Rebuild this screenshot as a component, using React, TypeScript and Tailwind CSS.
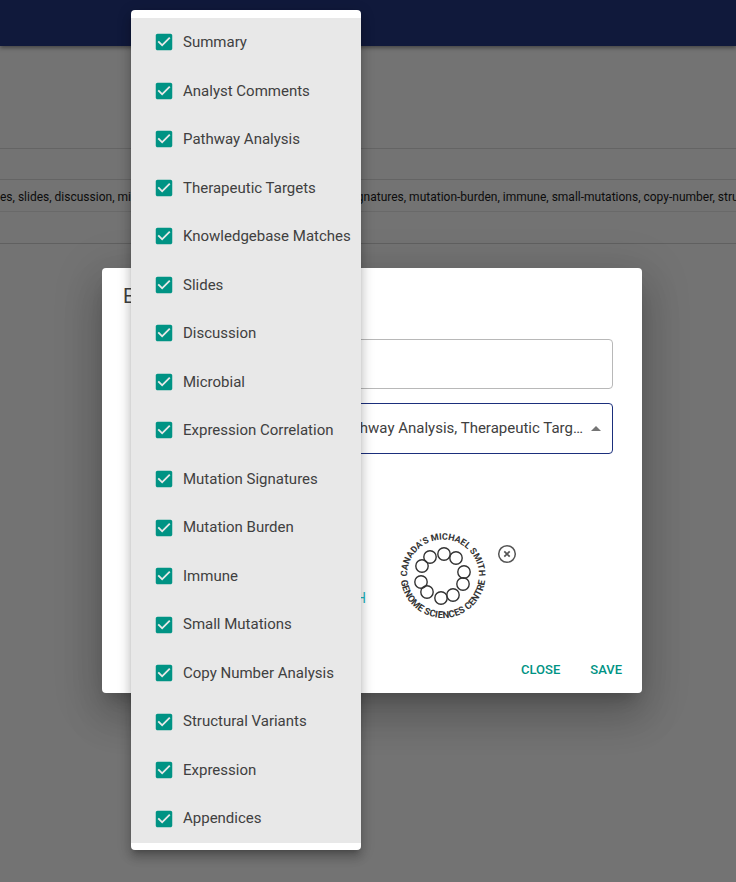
import React from "react";

const SECTIONS = [
  "Summary",
  "Analyst Comments",
  "Pathway Analysis",
  "Therapeutic Targets",
  "Knowledgebase Matches",
  "Slides",
  "Discussion",
  "Microbial",
  "Expression Correlation",
  "Mutation Signatures",
  "Mutation Burden",
  "Immune",
  "Small Mutations",
  "Copy Number Analysis",
  "Structural Variants",
  "Expression",
  "Appendices",
];

const SECTION_KEYS =
  "es, slides, discussion, microbial, expression-correlation, mutation-signatures, mutation-burden, immune, small-mutations, copy-number, structural-variants, expression, appendices";

const RING = [
  [444, 554], [456, 558], [464, 572], [463, 584], [453, 595],
  [441, 598], [427, 592], [421, 582], [422, 566], [430, 557],
];

function SectionItem({ name }: { name: string }) {
  return (
    <label className="flex items-center bg-[#e8e8e8] pr-2 pl-[22px] text-[15px] text-[#404040]">
      <span className="mr-2 grid place-items-center">
        <input
          type="checkbox"
          defaultChecked
          className="col-start-1 row-start-1 size-[22px] appearance-none"
        />
        <svg
          viewBox="0 0 24 24"
          className="pointer-events-none col-start-1 row-start-1 size-[22px] fill-[#009384]"
          aria-hidden="true"
        >
          <path d="M19 3H5c-1.11 0-2 .9-2 2v14c0 1.1.89 2 2 2h14c1.11 0 2-.9 2-2V5c0-1.1-.89-2-2-2zm-9 14l-5-5 1.41-1.41L10 14.17l7.59-7.59L19 8l-9 9z" />
        </svg>
      </span>
      <span className="whitespace-nowrap">{name}</span>
    </label>
  );
}

function CentreLogo() {
  return (
    <svg viewBox="398 531 90 90" className="size-[90px]" role="img" aria-label="Genome Sciences Centre">
      <defs>
        <path id="upper" d="M443 611.500A36 36 0 0 1 443 539.500A36 36 0 0 1 443 611.500" />
        <path id="lower" d="M443 533A42.500 42.500 0 0 0 443 618A42.500 42.500 0 0 0 443 533" />
      </defs>
      <g fill="none" stroke="#333" strokeWidth="1.4">
        {RING.map(([x, y]) => (
          <circle key={`${x}-${y}`} cx={x} cy={y} r="6.2" />
        ))}
      </g>
      <g fill="#333" fontWeight="700" textAnchor="middle">
        <text fontSize="9">
          <textPath href="#upper" startOffset="50%">CANADA’S MICHAEL SMITH</textPath>
        </text>
        <text fontSize="9.5">
          <textPath href="#lower" startOffset="50%">GENOME SCIENCES CENTRE</textPath>
        </text>
      </g>
    </svg>
  );
}

export default function App() {
  return (
    <div className="relative min-h-screen overflow-hidden bg-[#e6e6e6] font-['Roboto',sans-serif]">
      <header className="h-[46px] bg-[#203276] shadow-[0_2px_4px_rgba(0,0,0,0.4)]" />
      <main className="pt-[102px]">
        <table className="w-full table-fixed border-collapse border-t border-[#c8c8c8] text-xs text-[#181818]">
          <tbody>
            <tr className="h-[31px] border-b border-[#c8c8c8]">
              <td className="p-0" />
            </tr>
            <tr className="h-8 border-b border-[#d2d2d2]">
              <td className="overflow-hidden p-0 pt-[2px] whitespace-nowrap">{SECTION_KEYS}</td>
            </tr>
            <tr className="h-8 border-b border-[#c0c0c0]">
              <td className="p-0" />
            </tr>
          </tbody>
        </table>
      </main>

      <div className="absolute inset-0 bg-black/50 pt-[268px] pr-[94px] pl-[102px]">
        <section
          role="dialog"
          aria-labelledby="dialog-title"
          className="rounded bg-white shadow-[0_11px_15px_-7px_rgba(0,0,0,0.2),0_24px_38px_3px_rgba(0,0,0,0.14),0_9px_46px_8px_rgba(0,0,0,0.12)]"
        >
          <h2 id="dialog-title" className="px-[21px] pt-[14px] text-xl leading-7 text-[#404040]">
            Edit Template
          </h2>
          <form className="px-[29px] pt-[29px]">
            <input
              type="text"
              aria-label="Name"
              className="block h-[50px] w-full rounded border border-[#b8b8b8] px-[14px] text-[15px] text-[#404040]"
            />
            <div className="mt-[14px] grid items-center">
              <select
                aria-label="Sections"
                className="col-start-1 row-start-1 h-[51px] w-full appearance-none truncate rounded border border-[#1b2f7c] pr-7 pl-[2px] text-[15px] text-[#404040]"
              >
                <option>{SECTIONS.join(", ")}</option>
              </select>
              <svg
                viewBox="0 0 10 5"
                className="pointer-events-none col-start-1 row-start-1 mr-3 h-[5px] w-[10px] justify-self-end fill-[#757575]"
                aria-hidden="true"
              >
                <path d="M0 5L5 0L10 5z" />
              </svg>
            </div>
            <div className="mt-[77px] flex items-start">
              <span className="w-[235px] pt-[57px] text-right text-sm text-[#22b5c0]">HEALTH</span>
              <span className="ml-8">
                <CentreLogo />
              </span>
              <button type="button" aria-label="Remove logo" className="mt-[13px] ml-[9px]">
                <svg viewBox="0 0 20 20" className="size-5 fill-none stroke-[#555]" aria-hidden="true">
                  <circle cx="10" cy="10" r="8.300" strokeWidth="1.5" />
                  <path d="M7.300 7.300L12.700 12.700M12.700 7.300L7.300 12.700" strokeWidth="1.7" />
                </svg>
              </button>
            </div>
          </form>
          <footer className="flex justify-end gap-[30px] px-5 pt-[39px] pb-[14px] text-[13px] leading-[19px] font-medium text-[#009384]">
            <button type="button">CLOSE</button>
            <button type="button">SAVE</button>
          </footer>
        </section>
      </div>

      <fieldset
        aria-label="Sections"
        className="absolute top-[10px] bottom-8 left-[131px] grid w-[230px] min-w-0 auto-rows-fr rounded bg-white pt-2 pb-[7px] shadow-[0_5px_5px_-3px_rgba(0,0,0,0.2),0_8px_10px_1px_rgba(0,0,0,0.14),0_3px_14px_2px_rgba(0,0,0,0.12)]"
      >
        {SECTIONS.map((name) => (
          <SectionItem key={name} name={name} />
        ))}
      </fieldset>
    </div>
  );
}
